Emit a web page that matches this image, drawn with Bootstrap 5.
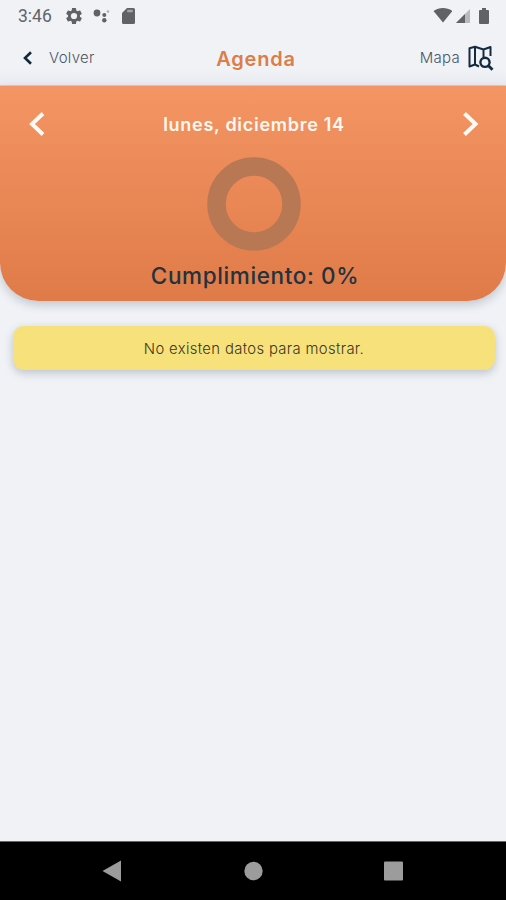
<!DOCTYPE html>
<html lang="es">
<head>
<meta charset="utf-8">
<meta name="viewport" content="width=device-width, initial-scale=1">
<title>Agenda</title>
<link href="https://cdn.jsdelivr.net/npm/bootstrap@5.3.0/dist/css/bootstrap.min.css" rel="stylesheet">
<style>
  body { background: #f0f2f6; font-family: Inter, "Open Sans", sans-serif; color: #13293d; }
  svg { display: block; flex: none; }
  .screen { height: 900px; width: 506px; }
  .status-bar { height: 32px; padding: 0 16px 0 18px; font-family: Roboto, sans-serif; font-size: 17.5px; color: #626468; }
  .status-time { width: 48px; line-height: 32px; }
  .app-header { height: 54px; padding: 0 12px 2px 20px; background: linear-gradient(#f0f2f6 70%, #e9ebf0); border-bottom: 1px solid #e2c9c2; display: grid; grid-template-columns: 1fr auto 1fr; }
  .nav-text { font-size: 15px; font-weight: 300; color: #4f565f; letter-spacing: .3px; line-height: 20px; margin-top: 1px; }
  .title-text { font-size: 20px; font-weight: 600; color: #dd7d48; letter-spacing: .75px; line-height: 24px; margin: 2px 2px 0 0; }
  .summary { height: 215px; background: linear-gradient(#f49564, #df7b48); border-radius: 0 0 38px 38px; box-shadow: 0 4px 10px rgba(50,65,90,.24); }
  .day-row { height: 38px; margin-top: 19px; padding: 0 24px; }
  .day-text { font-size: 18px; font-weight: 600; letter-spacing: .72px; color: #fff8f0; padding: 1px 0 0 2px; }
  .ring { margin-top: 14px; }
  .score { font-size: 22.5px; font-weight: 500; letter-spacing: .63px; line-height: 28px; margin-top: 11px; padding-left: 4px; color: #22323f; }
  .notice { height: 44px; margin: 25px 11px 0 13px; padding-top: 2px; background: #f7e17b; border-radius: 11px; box-shadow: 0 3px 8px rgba(50,65,90,.27); font-size: 14.8px; font-weight: 300; color: #3d3420; letter-spacing: .36px; }
  .system-nav { height: 59px; background: #000; border-top: 1px solid #666; }
</style>
</head>
<body>
<div class="screen d-flex flex-column overflow-hidden">
  <div class="status-bar d-flex align-items-center">
    <span class="status-time">3:46</span>
    <svg width="16" height="16" viewBox="2 2 20 20" fill="#606266"><path d="M19.43 12.98c.04-.32.07-.64.07-.98s-.03-.66-.07-.98l2.11-1.65c.19-.15.24-.42.12-.64l-2-3.46c-.12-.22-.39-.3-.61-.22l-2.49 1c-.52-.4-1.08-.73-1.69-.98l-.38-2.65A.49.49 0 0 0 14 2h-4c-.25 0-.46.18-.49.42l-.38 2.65c-.61.25-1.17.59-1.69.98l-2.49-1c-.23-.09-.49 0-.61.22l-2 3.46c-.13.22-.07.49.12.64l2.11 1.65c-.04.32-.07.65-.07.98s.03.66.07.98l-2.11 1.65c-.19.15-.24.42-.12.64l2 3.46c.12.22.39.3.61.22l2.49-1c.52.4 1.08.73 1.69.98l.38 2.65c.03.24.24.42.49.42h4c.25 0 .46-.18.49-.42l.38-2.65c.61-.25 1.17-.59 1.69-.98l2.49 1c.23.09.49 0 .61-.22l2-3.46c.12-.22.07-.49-.12-.64zM12 15.9a3.9 3.9 0 1 1 0-7.8 3.9 3.9 0 0 1 0 7.8z"/></svg>
    <svg class="ms-2" width="22" height="16" viewBox="0 0 22 16" fill="#606266"><circle cx="7" cy="5" r="3.4"/><circle cx="14.3" cy="7" r="2"/><circle cx="14.3" cy="12.300" r="2.200"/><circle cx="18" cy="3.500" r="1.300" fill="#aeb0b4"/></svg>
    <svg style="margin-left:10px" width="14" height="16" viewBox="0 0 14 16"><path d="M5 0h6.500q1.500 0 1.500 1.500v13q0 1.500-1.500 1.500h-10Q0 16 0 14.500V5z" fill="#606266"/><path d="M5.200 3h5.500" stroke="#a2a4a8" stroke-width="2.500"/></svg>
    <svg class="ms-auto" width="20" height="16" viewBox="0 0 20 16" fill="#606266"><path d="M.5 4C6 0 14 0 19.500 4L10 15.500z" transform="translate(1 -1)"/></svg>
    <svg class="ms-1" width="14" height="16" viewBox="0 0 14 16"><path d="M14 1v14H0z" fill="#b8babd"/><path d="M9 6v9H0z" fill="#606266"/></svg>
    <svg style="margin-left:8px" width="12" height="16" viewBox="0 0 12 16" fill="#606266"><path d="M4 0h4v2h2q1 0 1 1v12q0 1-1 1H2q-1 0-1-1V3q0-1 1-1h2z"/></svg>
  </div>

  <header class="app-header align-items-center">
    <div class="d-flex align-items-center">
      <svg width="14" height="16" viewBox="0 0 14 16"><path d="M11 2.200 5 8l6 5.800" fill="none" stroke="#10273b" stroke-width="2.600"/></svg>
      <span class="nav-text" style="margin-left:15px">Volver</span>
    </div>
    <h1 class="title-text">Agenda</h1>
    <div class="d-flex align-items-center justify-content-end">
      <span class="nav-text me-2">Mapa</span>
      <svg width="26" height="26" viewBox="0 0 26 26" fill="none" stroke="#142b3f" stroke-width="2" stroke-linejoin="round"><path d="M11 21.500 7 19.500 1.500 21.500V3.200L7 1.800l8.500 2.700L22.500 2v9M7 1.800v17.700M15.500 4.500v7.500"/><circle cx="17" cy="17.300" r="4.600" stroke-width="2.400"/><path d="m20.500 20.800 4 4" stroke-width="2.800"/></svg>
    </div>
  </header>

  <section class="summary">
    <div class="d-flex flex-column align-items-center">
      <div class="day-row d-flex align-items-center justify-content-between w-100">
        <svg width="22" height="26" viewBox="0 0 22 26"><path d="M19 2.500 8 13l11 10.500" fill="none" stroke="#fffaf4" stroke-width="4"/></svg>
        <span class="day-text">lunes, diciembre 14</span>
        <svg width="22" height="26" viewBox="0 0 22 26"><path d="m4.500 2.500 11 10.500-11 10.500" fill="none" stroke="#fffaf4" stroke-width="4"/></svg>
      </div>
      <svg class="ring" width="96" height="94" viewBox="0 0 96 94"><circle cx="49" cy="47" r="37.500" fill="none" stroke="#b97854" stroke-width="18.500"/></svg>
      <div class="score">Cumplimiento: 0%</div>
    </div>
  </section>

  <div class="notice d-flex align-items-center justify-content-center"><span>No existen datos para mostrar.</span></div>

  <nav class="system-nav mt-auto d-flex align-items-center justify-content-between px-5">
    <svg width="130" height="24" viewBox="0 0 130 24"><path d="M54.500 12 73 1.500v21z" fill="#9c9c9c"/></svg>
    <svg width="24" height="24" viewBox="0 0 24 24"><circle cx="12.500" cy="12" r="9.200" fill="#9c9c9c"/></svg>
    <svg width="130" height="24" viewBox="0 0 130 24"><rect x="56" y="2.500" width="19" height="19" rx="1" fill="#9c9c9c"/></svg>
  </nav>
</div>
<script src="https://cdn.jsdelivr.net/npm/bootstrap@5.3.0/dist/js/bootstrap.bundle.min.js"></script>
</body>
</html>
